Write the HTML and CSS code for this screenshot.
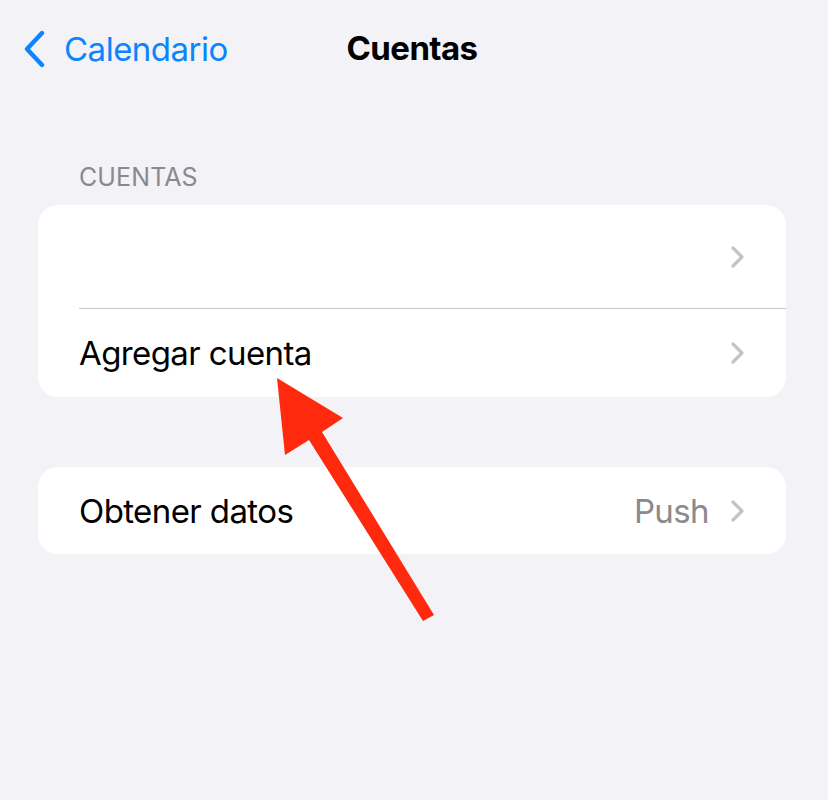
FILE: index.html
```html
<!DOCTYPE html>
<html lang="es">
<head>
<meta charset="utf-8">
<link rel="stylesheet" href="styles.css">
</head>
<body>
<div class="screen">
  <header class="nav">
    <div class="back">
      <svg class="back-chev" width="24" height="38" viewBox="0 0 24 38"><path d="M20 3 L5 19 L20 35" fill="none" stroke="#0a84ff" stroke-width="4.4" stroke-linecap="round" stroke-linejoin="round"/></svg>
      <span class="back-label">Calendario</span>
    </div>
    <div class="title">Cuentas</div>
  </header>

  <div class="section-header">CUENTAS</div>
  <div class="card">
    <div class="row row-tall">
      <span class="label"></span>
      <svg class="chev" width="18" height="24" viewBox="0 0 18 24"><path d="M4 3 L13 12 L4 21" fill="none" stroke="#c4c4c7" stroke-width="3.2" stroke-linecap="round" stroke-linejoin="round"/></svg>
    </div>
    <div class="row">
      <span class="label">Agregar cuenta</span>
      <svg class="chev" width="18" height="24" viewBox="0 0 18 24"><path d="M4 3 L13 12 L4 21" fill="none" stroke="#c4c4c7" stroke-width="3.2" stroke-linecap="round" stroke-linejoin="round"/></svg>
    </div>
  </div>

  <div class="card card-second">
    <div class="row row-short">
      <span class="label">Obtener datos</span>
      <span class="value">Push</span>
      <svg class="chev" width="18" height="24" viewBox="0 0 18 24"><path d="M4 3 L13 12 L4 21" fill="none" stroke="#c4c4c7" stroke-width="3.2" stroke-linecap="round" stroke-linejoin="round"/></svg>
    </div>
  </div>

  <svg class="arrow" width="828" height="800" viewBox="0 0 828 800">
    <polygon fill="#ff2a0e" points="277,378 343,418 322,432 434,615 423,621 309,440 285,455"/>
  </svg>
</div>
</body>
</html>
```

FILE: styles.css
```css
html, body {
  margin: 0;
  padding: 0;
  background: #f2f2f7;
}
body {
  font-family: Inter, "Liberation Sans", Arial, sans-serif;
  -webkit-font-smoothing: antialiased;
}
.screen {
  position: relative;
  width: 828px;
  height: 800px;
  overflow: hidden;
  background: #f2f2f7;
}
.nav {
  position: relative;
  height: 100px;
  display: flex;
  align-items: center;
}
.back {
  display: flex;
  align-items: center;
  padding-left: 22px;
  height: 100px;
  margin-top: -2px;
}
.back-chev {
  display: block;
}
.back-label {
  margin-left: 18px;
  font-size: 33px;
  color: #0a84ff;
  letter-spacing: -0.5px;
}
.title {
  position: absolute;
  left: 0;
  right: 0;
  top: 0;
  height: 100px;
  line-height: 100px;
  margin-top: -2px;
  padding-right: 4px;
  text-align: center;
  font-size: 33px;
  font-weight: 700;
  color: #000;
  letter-spacing: -0.6px;
}
.section-header {
  margin: 62px 0 0 79px;
  height: 30px;
  font-size: 25px;
  color: #8a8a8e;
  letter-spacing: 0.1px;
}
.card {
  margin: 13px 42px 0 38px;
  background: #fff;
  border-radius: 20px;
  overflow: hidden;
}
.card-second {
  margin-top: 70px;
}
.row {
  height: 89px;
  display: flex;
  align-items: center;
  padding-left: 41px;
  padding-right: 39px;
  position: relative;
}
.row-tall {
  height: 103px;
}
.row-short {
  height: 87px;
}
.row + .row::before {
  content: "";
  position: absolute;
  left: 41px;
  right: 0;
  top: 0;
  height: 1px;
  background: #c8c8cc;
}
.label {
  flex: 1;
  font-size: 33px;
  color: #000;
  letter-spacing: -0.6px;
}
.value {
  font-size: 33px;
  color: #8a8a8e;
  margin-right: 20px;
  letter-spacing: -0.6px;
}
.chev {
  display: block;
}
.arrow {
  position: absolute;
  left: 0;
  top: 0;
  pointer-events: none;
}
```
